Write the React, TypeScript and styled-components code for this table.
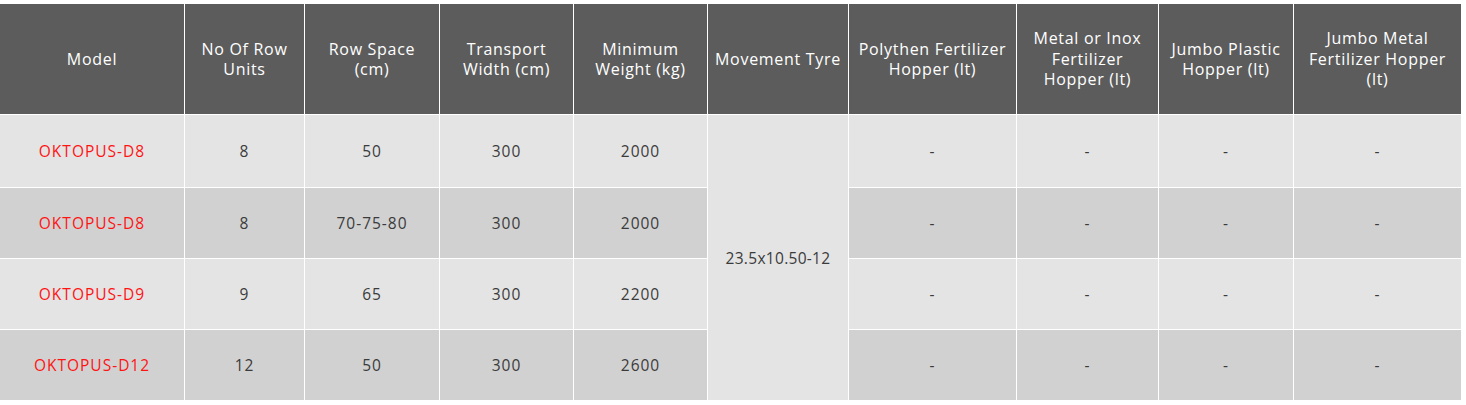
import React from "react";
import styled, { createGlobalStyle } from "styled-components";

const GlobalStyle = createGlobalStyle`
  html, body {
    margin: 0;
    padding: 0;
    background: #ffffff;
  }
  body {
    font-family: "Open Sans", "Liberation Sans", sans-serif;
  }
`;

const Page = styled.div`
  padding-top: 4px;
  width: 1461px;
`;

const Table = styled.table`
  width: 1461px;
  table-layout: fixed;
  border-collapse: separate;
  border-spacing: 0;
  font-family: "Open Sans", "Liberation Sans", sans-serif;
`;

const HeadRow = styled.tr`
  height: 110px;
`;

const BodyRow = styled.tr<{ $shade: "light" | "dark"; $h: number }>`
  height: ${(p) => p.$h}px;
  background: ${(p) => (p.$shade === "light" ? "#e4e4e4" : "#d1d1d1")};
`;

const HeadCell = styled.th`
  background: #5c5c5c;
  color: #ffffff;
  font-weight: 400;
  font-size: 16px;
  line-height: 20.5px;
  letter-spacing: 0.7px;
  text-align: center;
  vertical-align: middle;
  padding: 0 4px;
  border-left: 1px solid #ffffff;
  &:first-child {
    border-left: none;
  }
`;

const Cell = styled.td<{ $accent?: boolean; $tall?: boolean }>`
  color: ${(p) => (p.$accent ? "#ff1414" : "#3b3b3b")};
  font-size: 15.5px;
  letter-spacing: ${(p) => (p.$tall ? "0.3px" : "1px")};
  text-align: center;
  vertical-align: middle;
  padding: 0 4px;
  border-left: 1px solid #ffffff;
  border-top: 1px solid #ffffff;
  background: ${(p) => (p.$tall ? "#e4e4e4" : "inherit")};
  &:first-child {
    border-left: none;
  }
`;

const columns = [184, 120, 135, 134, 134, 141, 168, 142, 135, 168];

const headers: string[][] = [
  ["Model"],
  ["No Of Row", "Units"],
  ["Row Space", "(cm)"],
  ["Transport", "Width (cm)"],
  ["Minimum", "Weight (kg)"],
  ["Movement Tyre"],
  ["Polythen Fertilizer", "Hopper (lt)"],
  ["Metal or Inox", "Fertilizer", "Hopper (lt)"],
  ["Jumbo Plastic", "Hopper (lt)"],
  ["Jumbo Metal", "Fertilizer Hopper", "(lt)"],
];

type Machine = {
  model: string;
  units: string;
  space: string;
  width: string;
  weight: string;
};

const machines: Machine[] = [
  { model: "OKTOPUS-D8", units: "8", space: "50", width: "300", weight: "2000" },
  { model: "OKTOPUS-D8", units: "8", space: "70-75-80", width: "300", weight: "2000" },
  { model: "OKTOPUS-D9", units: "9", space: "65", width: "300", weight: "2200" },
  { model: "OKTOPUS-D12", units: "12", space: "50", width: "300", weight: "2600" },
];

const rowHeights = [73, 71, 71, 71];

export default function App() {
  return (
    <>
      <GlobalStyle />
      <Page>
        <Table>
          <colgroup>
            {columns.map((w, i) => (
              <col key={i} style={{ width: w }} />
            ))}
          </colgroup>
          <thead>
            <HeadRow>
              {headers.map((lines, i) => (
                <HeadCell key={i}>
                  {lines.map((l, j) => (
                    <React.Fragment key={j}>
                      {j > 0 && <br />}
                      {l}
                    </React.Fragment>
                  ))}
                </HeadCell>
              ))}
            </HeadRow>
          </thead>
          <tbody>
            {machines.map((m, i) => (
              <BodyRow key={i} $shade={i % 2 === 0 ? "light" : "dark"} $h={rowHeights[i]}>
                <Cell $accent>{m.model}</Cell>
                <Cell>{m.units}</Cell>
                <Cell>{m.space}</Cell>
                <Cell>{m.width}</Cell>
                <Cell>{m.weight}</Cell>
                {i === 0 && (
                  <Cell $tall rowSpan={4}>
                    23.5x10.50-12
                  </Cell>
                )}
                <Cell>-</Cell>
                <Cell>-</Cell>
                <Cell>-</Cell>
                <Cell>-</Cell>
              </BodyRow>
            ))}
          </tbody>
        </Table>
      </Page>
    </>
  );
}
